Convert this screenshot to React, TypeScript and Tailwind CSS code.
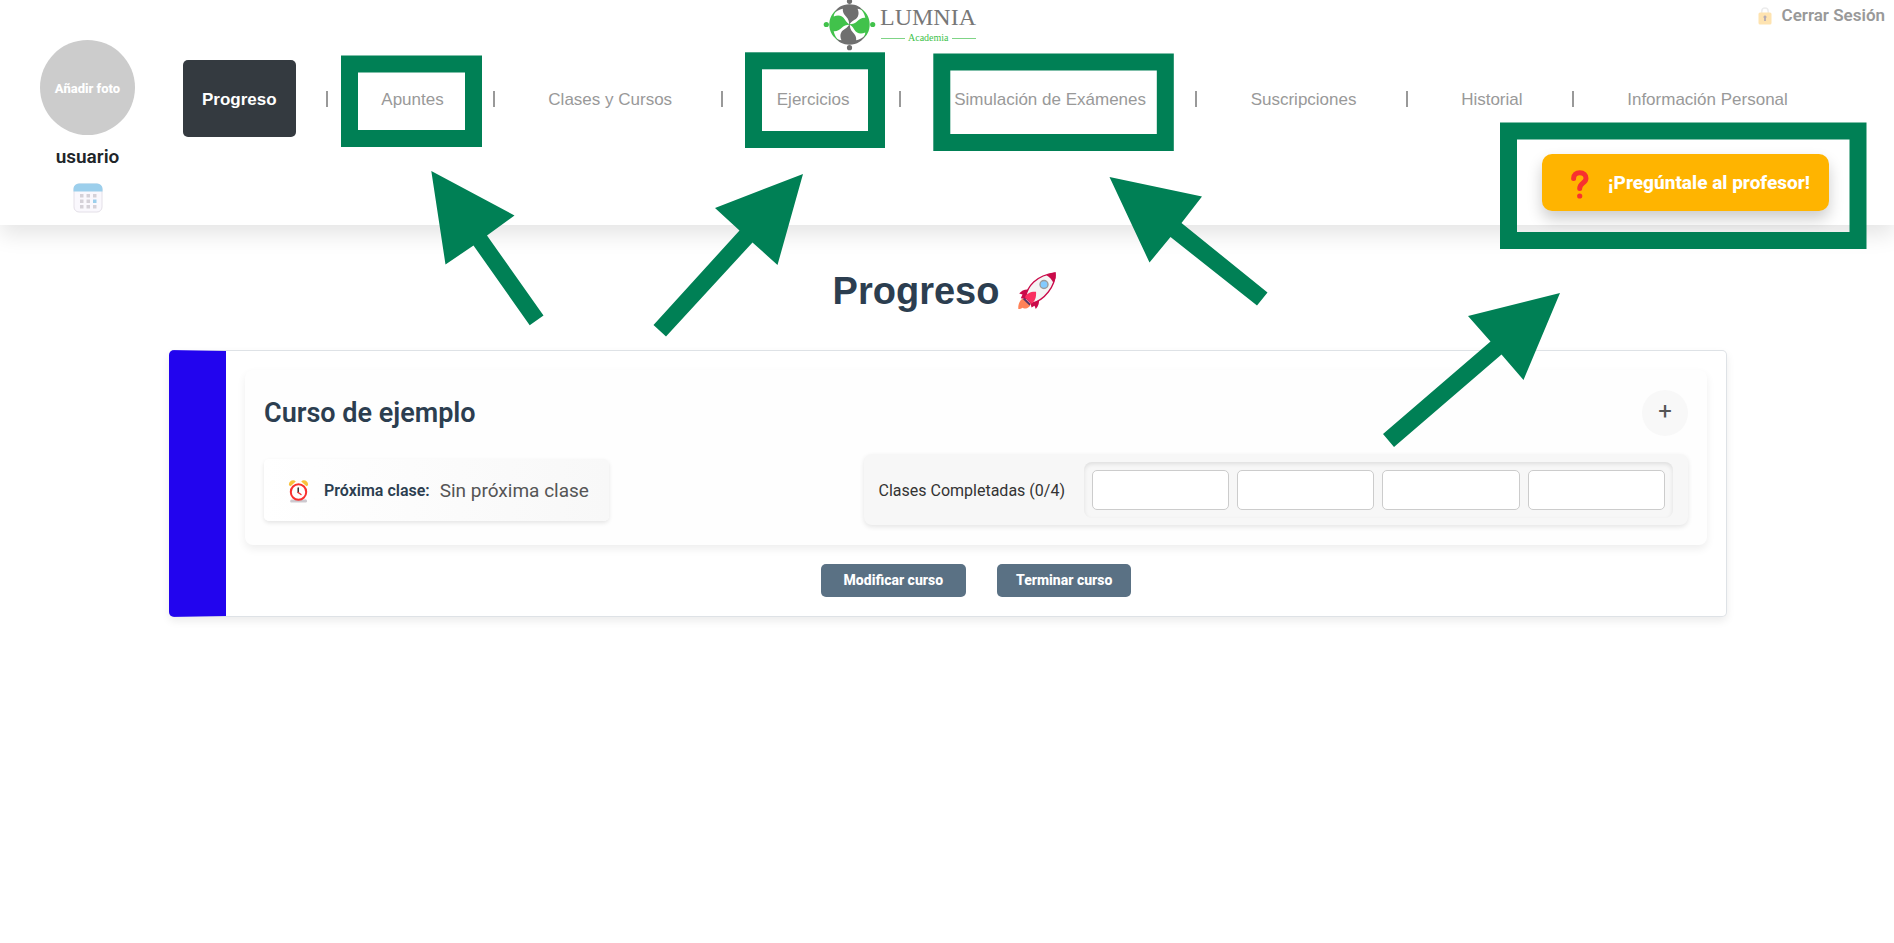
const NAV_ITEMS = [
  'Progreso',
  'Apuntes',
  'Clases y Cursos',
  'Ejercicios',
  'Simulación de Exámenes',
  'Suscripciones',
  'Historial',
  'Información Personal',
];

function FigureArm({ color }: { color: string }) {
  return (
    <g fill={color}>
      <circle cx="25" cy="1.8" r="2.6" />
      <path d="M8.8 14.500 C12 8.500 17.500 4.800 25 4.800 C31.500 4.800 36.500 7.500 39.800 12.500 C37 10.300 35 9.300 33 9.200 C35 13.500 34.300 18 30 20.300 C27.300 21.800 25.600 23.600 24.600 26.200 C25 22.600 24 19.600 21.500 17 C19.300 14.800 18 12.500 18.300 9.200 C14.500 10 11.200 11.800 8.800 14.500 Z" />
    </g>
  );
}

function Logo() {
  return (
    <svg width="156" height="52" viewBox="0 0 156 52" role="img" aria-label="Lumnia Academia">
      <g transform="translate(1.5 -.5)">
        <FigureArm color="#6f6f6f" />
        <g transform="rotate(90 25 25)">
          <FigureArm color="#41c24b" />
        </g>
        <g transform="rotate(180 25 25)">
          <FigureArm color="#6f6f6f" />
        </g>
        <g transform="rotate(270 25 25)">
          <FigureArm color="#41c24b" />
        </g>
      </g>
      <text x="57" y="25" fontFamily="Liberation Serif, serif" fontSize="24" fill="#777777">
        LUMNIA
      </text>
      <path d="M58 38.5H82M129 38.5H153" stroke="#7fd486" strokeWidth="1" />
      <text x="85" y="41" fontFamily="Liberation Serif, serif" fontSize="10" fill="#41c24b">
        Academia
      </text>
    </svg>
  );
}

function CalendarIcon() {
  return (
    <svg width="30" height="30" viewBox="0 0 30 30" aria-hidden="true">
      <rect x="1" y="1" width="28" height="28" rx="5" fill="#faf8fd" stroke="#e4e0e8" />
      <path d="M.5 8.5V6A5.500 5.500 0 0 1 6 .5H24A5.500 5.500 0 0 1 29.500 6V8.500Z" fill="#9ccfec" />
      <g fill="#d5d1d8">
        <path d="M7 11h3.500v3.500H7zM13.500 11H17v3.500h-3.500zM20 11h3.500v3.500H20zM7 16.500h3.500V20H7zM13.500 16.500H17V20h-3.500zM7 22h3.500v3.500H7zM13.500 22H17v3.500h-3.500zM20 22h3.500v3.500H20z" />
      </g>
      <path d="M20 16.500h3.500V20H20z" fill="#9ccfec" />
    </svg>
  );
}

function LockIcon() {
  return (
    <svg width="14" height="18" viewBox="0 0 14 18" aria-hidden="true">
      <path d="M3.800 6V4.200a3.200 3.200 0 0 1 6.400 0V6" fill="none" stroke="#ececec" strokeWidth="1.500" />
      <rect x=".5" y="5.500" width="13" height="12" rx="1.500" fill="#fee3b0" />
      <path d="M7 8.500a1.500 1.500 0 0 1 .9 2.700V14H6.100V11.200A1.500 1.500 0 0 1 7 8.500Z" fill="#b5abb5" />
    </svg>
  );
}

function QuestionIcon() {
  return (
    <svg width="38" height="32" viewBox="0 0 38 32" aria-hidden="true">
      <path
        d="M12.600 10.500C12.600 6.600 15.200 4.700 18.800 4.700C22.700 4.700 25 7 25 10.200C25 15.500 18.700 14.600 18.700 20.500"
        fill="none"
        stroke="#f8312f"
        strokeWidth="5"
        strokeLinecap="round"
      />
      <circle cx="18.700" cy="28" r="2.600" fill="#f8312f" />
    </svg>
  );
}

function RocketIcon() {
  return (
    <svg width="40" height="40" viewBox="0 0 40 40" aria-hidden="true">
      <path d="M7.500 27C3.500 28 1 32 1.300 38C3 38 4.600 37.700 5.600 36.800C6.300 37.700 8.500 37.800 10 37.200C12.500 36 13.500 34.500 13.800 33Z" fill="#ff8257" />
      <path d="M13 18.800C8.500 17.800 4.500 19.500 2.200 22.600L5.500 23.500L3.800 27.300L9 28ZM22 27.500C22.500 31.500 21.500 35 18.800 38L17.500 34.800L14.500 36.500L13.500 32Z" fill="#ca0b4a" />
      <path d="M8.500 26.500C10 16 19 4 38 1.800C39 15 27 29.500 14.500 32.500Z" fill="#f4f4f4" stroke="#ca0b4a" strokeWidth="1.300" />
      <path d="M29.500 4.300C33 2.200 36 1.400 38.500 1.400C39.300 5 38.700 8.500 36.500 12C35 8.800 32.500 6 29.500 4.300Z" fill="#ca0b4a" />
      <circle cx="27" cy="13.500" r="4" fill="#83cbff" stroke="#9b9b9b" strokeWidth="1.400" />
      <path d="M7.500 27L13.500 33L12.500 34.500L6 28.300Z" fill="#533566" />
      <path d="M8 26.300C9.500 22.500 13.500 20.500 19 20.800C19.500 25.800 18 30.500 14.500 32.700Z" fill="#f92f60" />
    </svg>
  );
}

function AlarmIcon() {
  return (
    <svg width="22" height="24" viewBox="0 0 22 24" aria-hidden="true">
      <path d="M3.500 20.500H16.500A1.700 1.700 0 0 1 18.200 23.500H2.800A1.700 1.700 0 0 1 3.500 20.500Z" fill="#cdc9cf" />
      <path d="M1 6.200C.2 2.800 4.800-.6 7.800 2.400L2.500 7.200ZM20 6.200C20.800 2.800 16.200-.6 13.200 2.400L18.500 7.200Z" fill="#f9c23c" />
      <circle cx="10.500" cy="13" r="7.700" fill="#ffffff" stroke="#f8312f" strokeWidth="2" />
      <path d="M10.200 9V13.500" stroke="#212121" strokeWidth="1.400" strokeLinecap="round" />
      <path d="M10.200 13.500L13 15.500" stroke="#f8312f" strokeWidth="1.400" strokeLinecap="round" />
    </svg>
  );
}

/* Green guide marks drawn over the page: frames and arrows. */
function GuideMarks() {
  return (
    <svg
      className="pointer-events-none absolute top-0 left-0"
      width="1894"
      height="480"
      viewBox="0 0 1894 480"
      aria-hidden="true"
    >
      <g fill="none" stroke="#008055" strokeWidth="17">
        <rect x="349.500" y="64" width="124" height="74.500" />
        <rect x="753.500" y="60.800" width="123" height="78.700" />
        <rect x="941.800" y="62" width="223.500" height="80.500" />
        <rect x="1508.500" y="131" width="349.500" height="109.500" />
      </g>
      <g fill="#008055">
        <path d="M431.300 171L514.500 215.500L487 235.500L543.500 315.500L529.700 325.300L473.500 245.500L445.500 264.500Z" />
        <path d="M803 174L777.500 265L752.500 242.500L666 336.500L653.500 325L739.500 230.500L715 208Z" />
        <path d="M1109.500 177L1202 196.500L1181.500 223L1267.500 292.500L1257 305.500L1170.500 237L1149.500 262.500Z" />
        <path d="M1560 293L1523.500 380L1501.500 354.500L1394 447L1383 434L1490.500 341.500L1468 316Z" />
      </g>
    </svg>
  );
}

export default function App() {
  return (
    <div className="relative min-h-screen overflow-x-hidden bg-white font-['Roboto',sans-serif] text-[#212529]">
      <header className="flex bg-white shadow-[0_10px_20px_rgba(0,0,0,0.1)]">
        <div className="flex w-[175px] shrink-0 flex-col items-center pt-10">
          <button className="h-[95px] w-[95px] rounded-full bg-[#cccccc] pt-0.5 text-[13px] font-extrabold text-white">
            Añadir foto
          </button>
          <p className="mt-2 text-[19px] leading-7 font-semibold">usuario</p>
          <button className="mt-3" aria-label="Calendario">
            <CalendarIcon />
          </button>
        </div>

        <div className="flex min-w-0 flex-1 flex-col pb-3.5">
          <div className="flex h-15 items-start">
            <div className="flex flex-1 justify-center pr-[130px]">
              <Logo />
            </div>
            <a href="#salir" className="flex items-center gap-2.5 pt-[3px] pr-[9px] text-[17px] font-semibold text-[#999999]">
              <LockIcon />
              Cerrar Sesión
            </a>
          </div>

          <nav
            aria-label="Principal"
            className="mr-[87px] ml-2 flex items-center justify-between font-['Liberation_Sans',Arial,sans-serif] text-[17px] whitespace-nowrap text-[#999999]"
          >
            {NAV_ITEMS.map((item, i) => (
              <div key={item} className="contents">
                {i > 0 && <span className="mr-1 h-4 w-0.5 bg-[#999999]" />}
                <a
                  href="#seccion"
                  aria-current={i === 0 ? 'page' : undefined}
                  className={
                    i === 0
                      ? 'flex h-[77px] items-center rounded-[5px] bg-[#343a40] px-[19px] pt-0.5 font-bold text-white'
                      : 'flex h-[77px] items-center px-[19px] pt-0.5'
                  }
                >
                  {item}
                </a>
              </div>
            ))}
          </nav>

          <div className="mt-[17px] mr-[65px] flex justify-end">
            <button className="flex h-[57px] items-center gap-[9px] rounded-[10px] bg-[#ffb400] px-[19px] pt-0.5 text-[19px] font-extrabold text-white shadow-[0_8px_15px_rgba(0,0,0,0.2)]">
              <QuestionIcon />
              ¡Pregúntale al profesor!
            </button>
          </div>
        </div>
      </header>

      <main className="pt-[41px] pr-[167px] pl-[169px]">
        <h1 className="flex items-center justify-center gap-[18px] pr-1.5 font-['Liberation_Sans',Arial,sans-serif] text-[38px] leading-[50px] font-bold text-[#2c3e50]">
          Progreso
          <RocketIcon />
        </h1>

        <section className="mt-[34px] rounded-[5px] border border-l-[57px] border-[#dee2e6] border-l-[#2204ee] bg-white p-[19px] shadow-[0_4px_8px_rgba(0,0,0,0.08)]">
          <div className="rounded-lg bg-[#fefefe] px-[19px] pt-5 pb-5 shadow-[0_4px_8px_rgba(0,0,0,0.07)]">
            <div className="flex items-center justify-between">
              <h2 className="text-[27px] leading-9 font-semibold text-[#2c3e50]">Curso de ejemplo</h2>
              <button
                aria-label="Ampliar"
                className="flex h-[46px] w-[46px] items-center justify-center rounded-full bg-[#f8f8f8] pb-1 text-2xl text-[#555555]"
              >
                +
              </button>
            </div>

            <div className="mt-[18px] flex items-center justify-between">
              <p className="flex h-[62px] items-center rounded-[5px] bg-linear-to-r from-white to-[#f8f8f8] pt-[3px] pr-5 pl-6 shadow-[0_2px_4px_rgba(0,0,0,0.1)]">
                <AlarmIcon />
                <strong className="ml-3.5 text-base font-semibold text-[#2c3e50]">Próxima clase:</strong>
                <span className="ml-2.5 text-[19px] text-[#555555]">Sin próxima clase</span>
              </p>

              <div className="flex w-[57.9%] items-center gap-[19px] rounded-lg bg-[#f7f7f7] pt-2 pr-[15px] pb-[7px] pl-[15px] shadow-[0_2px_5px_rgba(0,0,0,0.1)]">
                <span className="pt-0.5 text-base whitespace-nowrap text-[#333333]">Clases Completadas (0/4)</span>
                <div className="grid flex-1 grid-cols-4 gap-2 rounded-lg p-2 shadow-[inset_0_2px_4px_rgba(0,0,0,0.1)]">
                  {[1, 2, 3, 4].map((n) => (
                    <div key={n} className="h-10 rounded-[5px] border border-[#cccccc] bg-white" />
                  ))}
                </div>
              </div>
            </div>
          </div>

          <div className="mt-[19px] flex justify-center gap-[31px] text-sm font-extrabold text-white">
            <button className="h-[33px] rounded-[5px] bg-[#5a7184] px-[23px] pb-px">Modificar curso</button>
            <button className="h-[33px] rounded-[5px] bg-[#5a7184] px-[19px] pb-px">Terminar curso</button>
          </div>
        </section>
      </main>

      <GuideMarks />
    </div>
  );
}
